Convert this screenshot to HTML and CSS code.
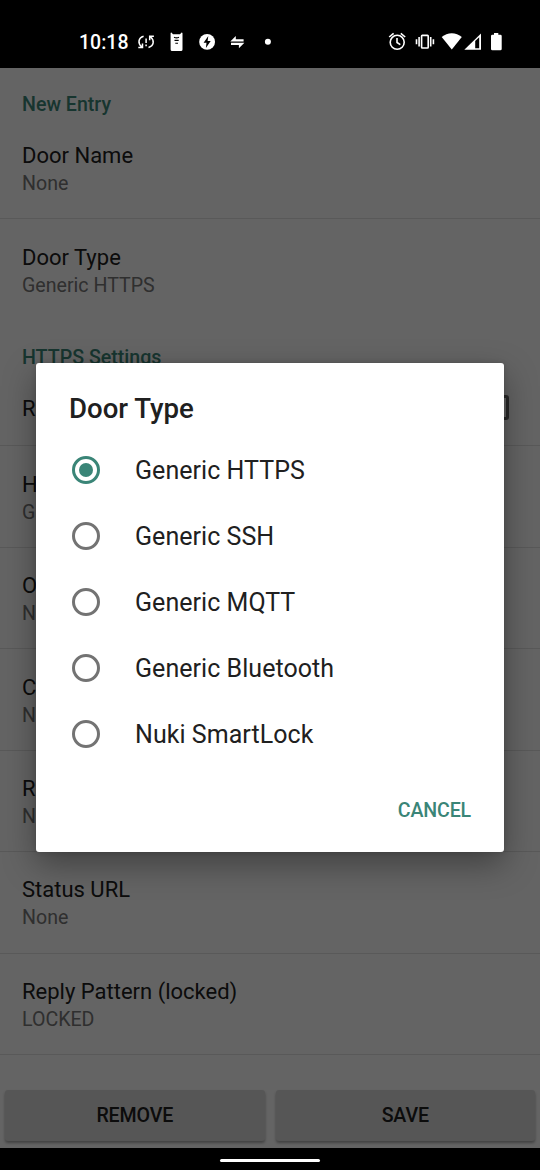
FILE: index.html
```html
<!DOCTYPE html>
<html lang="en">
<head>
<meta charset="utf-8">
<title>Door Type</title>
<link rel="stylesheet" href="styles.css">
</head>
<body>
<div class="phone">
  <header class="status">
    <span class="clock">10:18</span>
    <svg class="notifications" width="142" height="24" viewBox="134 30 142 24" fill="#fff">
      <g fill="none" stroke="#fff" stroke-width="1.5">
        <path d="M143.600 36.300C138.200 38 137.400 43.200 141.800 47M138.300 47.500H142.500V43.500M148.500 47.500C154 45.800 154.800 40.600 150.400 36.800M153.900 36.300H149.700V40.300"/>
        <path d="M146.100 38.500V43M146.100 44.600V46.200"/>
      </g>
      <path d="M170.600 33.200Q170.600 32.400 171.400 32.400L173 34.200H180L181.600 32.400Q182.500 32.400 182.500 33.200V49.500Q182.500 51 181 51H172.100Q170.600 51 170.600 49.500Z"/>
      <path d="M174 37.300Q176.500 38.500 179 37.300M174.500 40.400H178.700M175.300 43.200H178" stroke="#000" stroke-width="1.100" fill="none"/>
      <circle cx="207.100" cy="41.900" r="7.900"/>
      <path d="M208.300 36L203.600 42.700H206.500L205.900 47.900L210.700 41.100H207.600Z" fill="#000"/>
      <path d="M230.300 41.600L235.800 36V39.300H243.600V41.600ZM244.400 42.700L238.900 48.200V45H231V42.700Z"/>
      <circle cx="267.900" cy="41.800" r="3"/>
    </svg>
    <svg class="system" width="120" height="24" viewBox="386 30 120 24" fill="#fff">
      <g fill="none" stroke="#fff" stroke-width="1.600">
        <circle cx="397.200" cy="42.300" r="7"/>
        <path d="M397 37.900V42.500L400.300 44.700M389.200 37L393.600 33.300M400.800 33.300L405.200 37"/>
        <rect x="421.600" y="35.400" width="6.600" height="12.600" rx=".7"/>
        <path d="M419.100 37V46.500M430.700 37V46.500M416.500 39.200V44.300M433.400 39.200V44.300"/>
      </g>
      <path d="M441.700 37.100C447.300 32 456.200 32 461.800 37.100L451.800 49.600Z"/>
      <path d="M481 33.400V49.700H464.300Z"/>
      <path d="M475.200 41L479.200 37.200V48.200H475.200Z" fill="#000"/>
      <path d="M494 33H498.300V34.700H500.300Q501.700 34.700 501.700 36V49Q501.700 50.300 500.300 50.300H492.400Q491 50.300 491 49V36Q491 34.700 492.400 34.700H494Z"/>
    </svg>
  </header>

  <main class="settings">
    <h2 class="section first">New Entry</h2>
    <div class="pref"><span class="name">Door Name</span><span class="value">None</span></div>
    <div class="pref last"><span class="name">Door Type</span><span class="value">Generic HTTPS</span></div>
    <h2 class="section">HTTPS Settings</h2>
    <div class="pref check"><span class="name">R</span><span class="checkbox"></span></div>
    <div class="pref"><span class="name">H</span><span class="value">G</span></div>
    <div class="pref"><span class="name">O</span><span class="value">N</span></div>
    <div class="pref"><span class="name">C</span><span class="value">N</span></div>
    <div class="pref"><span class="name">R</span><span class="value">N</span></div>
    <div class="pref"><span class="name">Status URL</span><span class="value">None</span></div>
    <div class="pref"><span class="name">Reply Pattern (locked)</span><span class="value">LOCKED</span></div>
    <div class="actions"><button class="action">REMOVE</button><button class="action">SAVE</button></div>
  </main>

  <footer class="nav"><span class="handle"></span></footer>

  <div class="scrim">
    <section class="dialog" role="dialog">
      <h1 class="title">Door Type</h1>
      <div class="option"><span class="radio checked"></span>Generic HTTPS</div>
      <div class="option"><span class="radio"></span>Generic SSH</div>
      <div class="option"><span class="radio"></span>Generic MQTT</div>
      <div class="option"><span class="radio"></span>Generic Bluetooth</div>
      <div class="option"><span class="radio"></span>Nuki SmartLock</div>
      <div class="buttons"><button class="cancel">CANCEL</button></div>
    </section>
  </div>
</div>
</body>
</html>
```
FILE: styles.css
```css
* { box-sizing: border-box; }
body { margin: 0; background: #000; font-family: Roboto, sans-serif; }
button { border: 0; font-family: inherit; font-weight: 500; font-size: 19.6px; letter-spacing: -.15px; padding: 0; }
.phone { position: relative; width: 540px; height: 1170px; overflow: hidden; display: flex; flex-direction: column; }
.status { height: 68px; flex: none; display: flex; align-items: center; padding: 16px 34px 0 79px; color: #fff; }
.clock { width: 55px; padding-top: 2px; font-size: 19.5px; font-weight: 500; line-height: 24px; white-space: nowrap; }
.notifications { flex: none; }
.system { flex: none; margin-left: auto; }
.settings { height: 1080px; flex: none; background: #fafafa; display: flex; flex-direction: column; }
.section { margin: 0; height: 49px; flex: none; padding: 23.5px 22px 0; font-size: 19.6px; font-weight: 500; line-height: 26px; color: #3a8577; }
.section.first { height: 50px; }
.pref { height: 101.45px; flex: none; display: flex; flex-direction: column; padding: 24.3px 22px 0; border-bottom: 1.5px solid #dedede; }
.pref.last { border-bottom-color: transparent; height: 102px; }
.pref.check { height: 76px; flex-direction: row; justify-content: space-between; align-items: center; padding: 3px 31px 0 22px; }
.name { font-size: 22px; line-height: 28px; color: #202020; }
.value { font-size: 19.6px; line-height: 28px; color: #757575; }
.checkbox { width: 25px; height: 25px; margin-bottom: 4px; border: 3px solid #666; border-radius: 3px; }
.actions { margin-top: auto; height: 58px; flex: none; display: flex; gap: 11px; padding: 0 5px 7px; }
.action { flex: 1; height: 51px; background: #d7d7d7; border-radius: 3px; box-shadow: 0 2px 3px rgba(0,0,0,.35); color: #202020; }
.nav { flex: 1; display: flex; align-items: center; justify-content: center; padding-top: 2px; }
.handle { width: 100px; height: 3px; border-radius: 2px; background: #fff; }
.scrim { position: absolute; left: 0; right: 0; top: 68px; height: 1080px; overflow: hidden; background: rgba(0,0,0,.6); display: flex; justify-content: center; align-items: center; }
.dialog { width: 468px; height: 489px; margin-bottom: 1px; background: #fff; border-radius: 3px; box-shadow: 0 12px 33px rgba(0,0,0,.36), 0 0 5px rgba(0,0,0,.15); display: flex; flex-direction: column; padding-top: 28px; color: #202020; }
.title { margin: 0 0 12px; padding-left: 33px; font-size: 27.6px; line-height: 35px; font-weight: 500; }
.option { height: 66px; flex: none; display: flex; align-items: center; gap: 35.5px; padding-left: 35.5px; font-size: 25px; line-height: 30px; letter-spacing: .05px; }
.radio { width: 28px; height: 28px; margin-bottom: 3px; border: 3px solid #737373; border-radius: 50%; display: flex; flex: none; align-items: center; justify-content: center; }
.radio.checked { border-color: #3a8577; }
.radio.checked::before { content: ""; width: 14px; height: 14px; border-radius: 50%; background: #3a8577; }
.buttons { margin-top: auto; display: flex; justify-content: flex-end; padding: 0 33px 17px; }
.cancel { height: 49px; background: none; color: #3a8577; }
```
